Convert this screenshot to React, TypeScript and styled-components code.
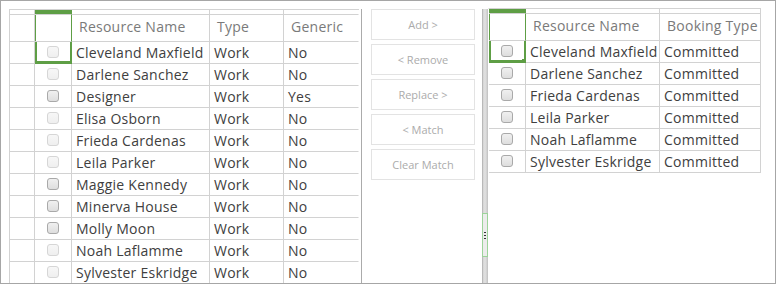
import React from 'react';
import styled, { createGlobalStyle } from 'styled-components';

interface ResourceRow {
  name: string;
  type: string;
  generic: string;
  locked: boolean;
}

interface BookingRow {
  name: string;
  booking: string;
}

const GlobalStyle = createGlobalStyle`
  html, body {
    margin: 0;
    padding: 0;
    background: #fff;
  }
  body {
    font-family: "Open Sans", "Liberation Sans", sans-serif;
  }
`;

const GREEN = '#5e9e45';
const LINE = '#d2d2d2';

const Frame = styled.div`
  width: 776px;
  height: 284px;
  box-sizing: border-box;
  border: 1px solid #a6a6a6;
  display: flex;
  overflow: hidden;
  background: #fff;
`;

const LeftPane = styled.div`
  width: 361px;
  flex: none;
  box-sizing: border-box;
  padding: 8px 0 0 8px;
  overflow: hidden;
`;

const GridBox = styled.div`
  height: 100%;
  border-right: 1px solid #ababab;
  margin-top: 1px;
`;

const Grid = styled.div<{ $cols: string; $right?: boolean }>`
  display: grid;
  grid-template-columns: ${(p) => p.$cols};
  width: max-content;
  border-top: 1px solid ${LINE};
  border-left: 1px solid ${(p) => (p.$right ? 'transparent' : LINE)};
  margin-top: -1px;
`;

const Cell = styled.div<{ $last?: boolean; $h: number }>`
  box-sizing: border-box;
  height: ${(p) => p.$h}px;
  border-bottom: 1px solid ${LINE};
  border-right: 1px solid ${(p) => (p.$last ? 'transparent' : LINE)};
  display: flex;
  align-items: center;
  font-size: 14px;
  letter-spacing: 0.25px;
  color: #404040;
  padding-left: 4px;
  white-space: nowrap;
  overflow: hidden;
  position: relative;
`;

const BarCell = styled(Cell)<{ $green?: boolean }>`
  padding: 0;
  background: ${(p) => (p.$green ? GREEN : 'transparent')};
  border-right-color: ${(p) => (p.$green ? GREEN : p.$last ? 'transparent' : LINE)};
`;

const HeadCell = styled(Cell)<{ $green?: boolean }>`
  color: #7a7a7a;
  padding-left: 7px;
  padding-bottom: 4px;
  ${(p) => p.$green && `box-shadow: inset 1px 0 0 ${GREEN}; border-right-color: ${GREEN};`}
`;

const BoxCell = styled(Cell)<{ $selected?: boolean }>`
  justify-content: center;
  padding: 0;
  ${(p) =>
    p.$selected &&
    `box-shadow: inset 2px 0 0 ${GREEN}, inset 0 -1px 0 ${GREEN}; border-right: 2px solid ${GREEN}; border-bottom: 2px solid ${GREEN};`}
`;

const FillHandle = styled.span`
  position: absolute;
  right: -3px;
  bottom: -3px;
  width: 5px;
  height: 5px;
  background: ${GREEN};
  z-index: 2;
`;

const Check = styled.span<{ $locked?: boolean }>`
  width: 12px;
  height: 12px;
  box-sizing: border-box;
  border-radius: 3px;
  border: 1px solid ${(p) => (p.$locked ? '#d6d6d6' : '#a9a9a9')};
  background: ${(p) =>
    p.$locked ? 'linear-gradient(#f7f7f7, #efefef)' : 'linear-gradient(#f0f0f0, #dedede)'};
  margin-top: -1px;
`;

const MiddlePane = styled.div`
  width: 120px;
  flex: none;
  box-sizing: border-box;
  padding: 8px 0 0 9px;
  display: flex;
  flex-direction: column;
  gap: 4px;
`;

const ActionButton = styled.button`
  width: 104px;
  height: 31px;
  box-sizing: border-box;
  border: 1px solid #e3e3e3;
  background: #fff;
  color: #ababab;
  font-family: "Open Sans", "Liberation Sans", sans-serif;
  font-size: 11px;
  padding: 0;
  cursor: default;
`;

const Splitter = styled.div`
  width: 6px;
  flex: none;
  margin-top: 8px;
  background: linear-gradient(to right, #b9b9b9 0, #b9b9b9 1px, #d4d4d4 1px, #e2e2e2 3px, #cfcfcf 5px, #bdbdbd 6px);
  display: flex;
  flex-direction: column;
  justify-content: flex-end;
  padding-bottom: 26px;
  box-sizing: border-box;
`;

const Grip = styled.div`
  height: 44px;
  box-sizing: border-box;
  border: 1px solid #9cd39a;
  background: #ececec;
  display: flex;
  flex-direction: column;
  align-items: center;
  justify-content: center;
  gap: 2px;
`;

const GripDash = styled.span`
  width: 2px;
  height: 1px;
  background: #333;
`;

const RightPane = styled.div`
  flex: 1;
  padding-top: 8px;
  overflow: hidden;
`;

const leftRows: ResourceRow[] = [
  { name: 'Cleveland Maxfield', type: 'Work', generic: 'No', locked: true },
  { name: 'Darlene Sanchez', type: 'Work', generic: 'No', locked: true },
  { name: 'Designer', type: 'Work', generic: 'Yes', locked: false },
  { name: 'Elisa Osborn', type: 'Work', generic: 'No', locked: true },
  { name: 'Frieda Cardenas', type: 'Work', generic: 'No', locked: true },
  { name: 'Leila Parker', type: 'Work', generic: 'No', locked: true },
  { name: 'Maggie Kennedy', type: 'Work', generic: 'No', locked: false },
  { name: 'Minerva House', type: 'Work', generic: 'No', locked: false },
  { name: 'Molly Moon', type: 'Work', generic: 'No', locked: false },
  { name: 'Noah Laflamme', type: 'Work', generic: 'No', locked: true },
  { name: 'Sylvester Eskridge', type: 'Work', generic: 'No', locked: true },
];

const rightRows: BookingRow[] = [
  { name: 'Cleveland Maxfield', booking: 'Committed' },
  { name: 'Darlene Sanchez', booking: 'Committed' },
  { name: 'Frieda Cardenas', booking: 'Committed' },
  { name: 'Leila Parker', booking: 'Committed' },
  { name: 'Noah Laflamme', booking: 'Committed' },
  { name: 'Sylvester Eskridge', booking: 'Committed' },
];

const buttons = ['Add >', '< Remove', 'Replace >', '< Match', 'Clear Match'];

const BAR = 5;
const HEAD = 27;
const ROW = 22;

const App: React.FC = () => {
  return (
    <>
      <GlobalStyle />
      <Frame>
        <LeftPane>
          <GridBox>
            <Grid $cols="25px 37px 138px 74px 75px">
              <BarCell $h={BAR} />
              <BarCell $h={BAR} $green />
              <BarCell $h={BAR} />
              <BarCell $h={BAR} />
              <BarCell $h={BAR} $last />

              <HeadCell $h={HEAD} />
              <HeadCell $h={HEAD} $green />
              <HeadCell $h={HEAD}>Resource Name</HeadCell>
              <HeadCell $h={HEAD}>Type</HeadCell>
              <HeadCell $h={HEAD} $last>Generic</HeadCell>

              {leftRows.map((row, index) => (
                <React.Fragment key={index}>
                  <Cell $h={ROW} />
                  <BoxCell $h={ROW} $selected={index === 0}>
                    <Check $locked={row.locked} />
                  </BoxCell>
                  <Cell $h={ROW}>{row.name}</Cell>
                  <Cell $h={ROW}>{row.type}</Cell>
                  <Cell $h={ROW} $last>{row.generic}</Cell>
                </React.Fragment>
              ))}
            </Grid>
          </GridBox>
        </LeftPane>

        <MiddlePane>
          {buttons.map((label) => (
            <ActionButton key={label} disabled>
              {label}
            </ActionButton>
          ))}
        </MiddlePane>

        <Splitter>
          <Grip>
            <GripDash />
            <GripDash />
            <GripDash />
          </Grip>
        </Splitter>

        <RightPane>
          <Grid $cols="37px 134px 101px" $right>
            <BarCell $h={BAR} $green />
            <BarCell $h={BAR} />
            <BarCell $h={BAR} />

            <HeadCell $h={HEAD} $green />
            <HeadCell $h={HEAD}>Resource Name</HeadCell>
            <HeadCell $h={HEAD}>Booking Type</HeadCell>

            {rightRows.map((row, index) => (
              <React.Fragment key={index}>
                <BoxCell $h={ROW} $selected={index === 0}>
                  <Check />
                  {index === 0 && <FillHandle />}
                </BoxCell>
                <Cell $h={ROW}>{row.name}</Cell>
                <Cell $h={ROW}>{row.booking}</Cell>
              </React.Fragment>
            ))}
          </Grid>
        </RightPane>
      </Frame>
    </>
  );
};

export default App;
